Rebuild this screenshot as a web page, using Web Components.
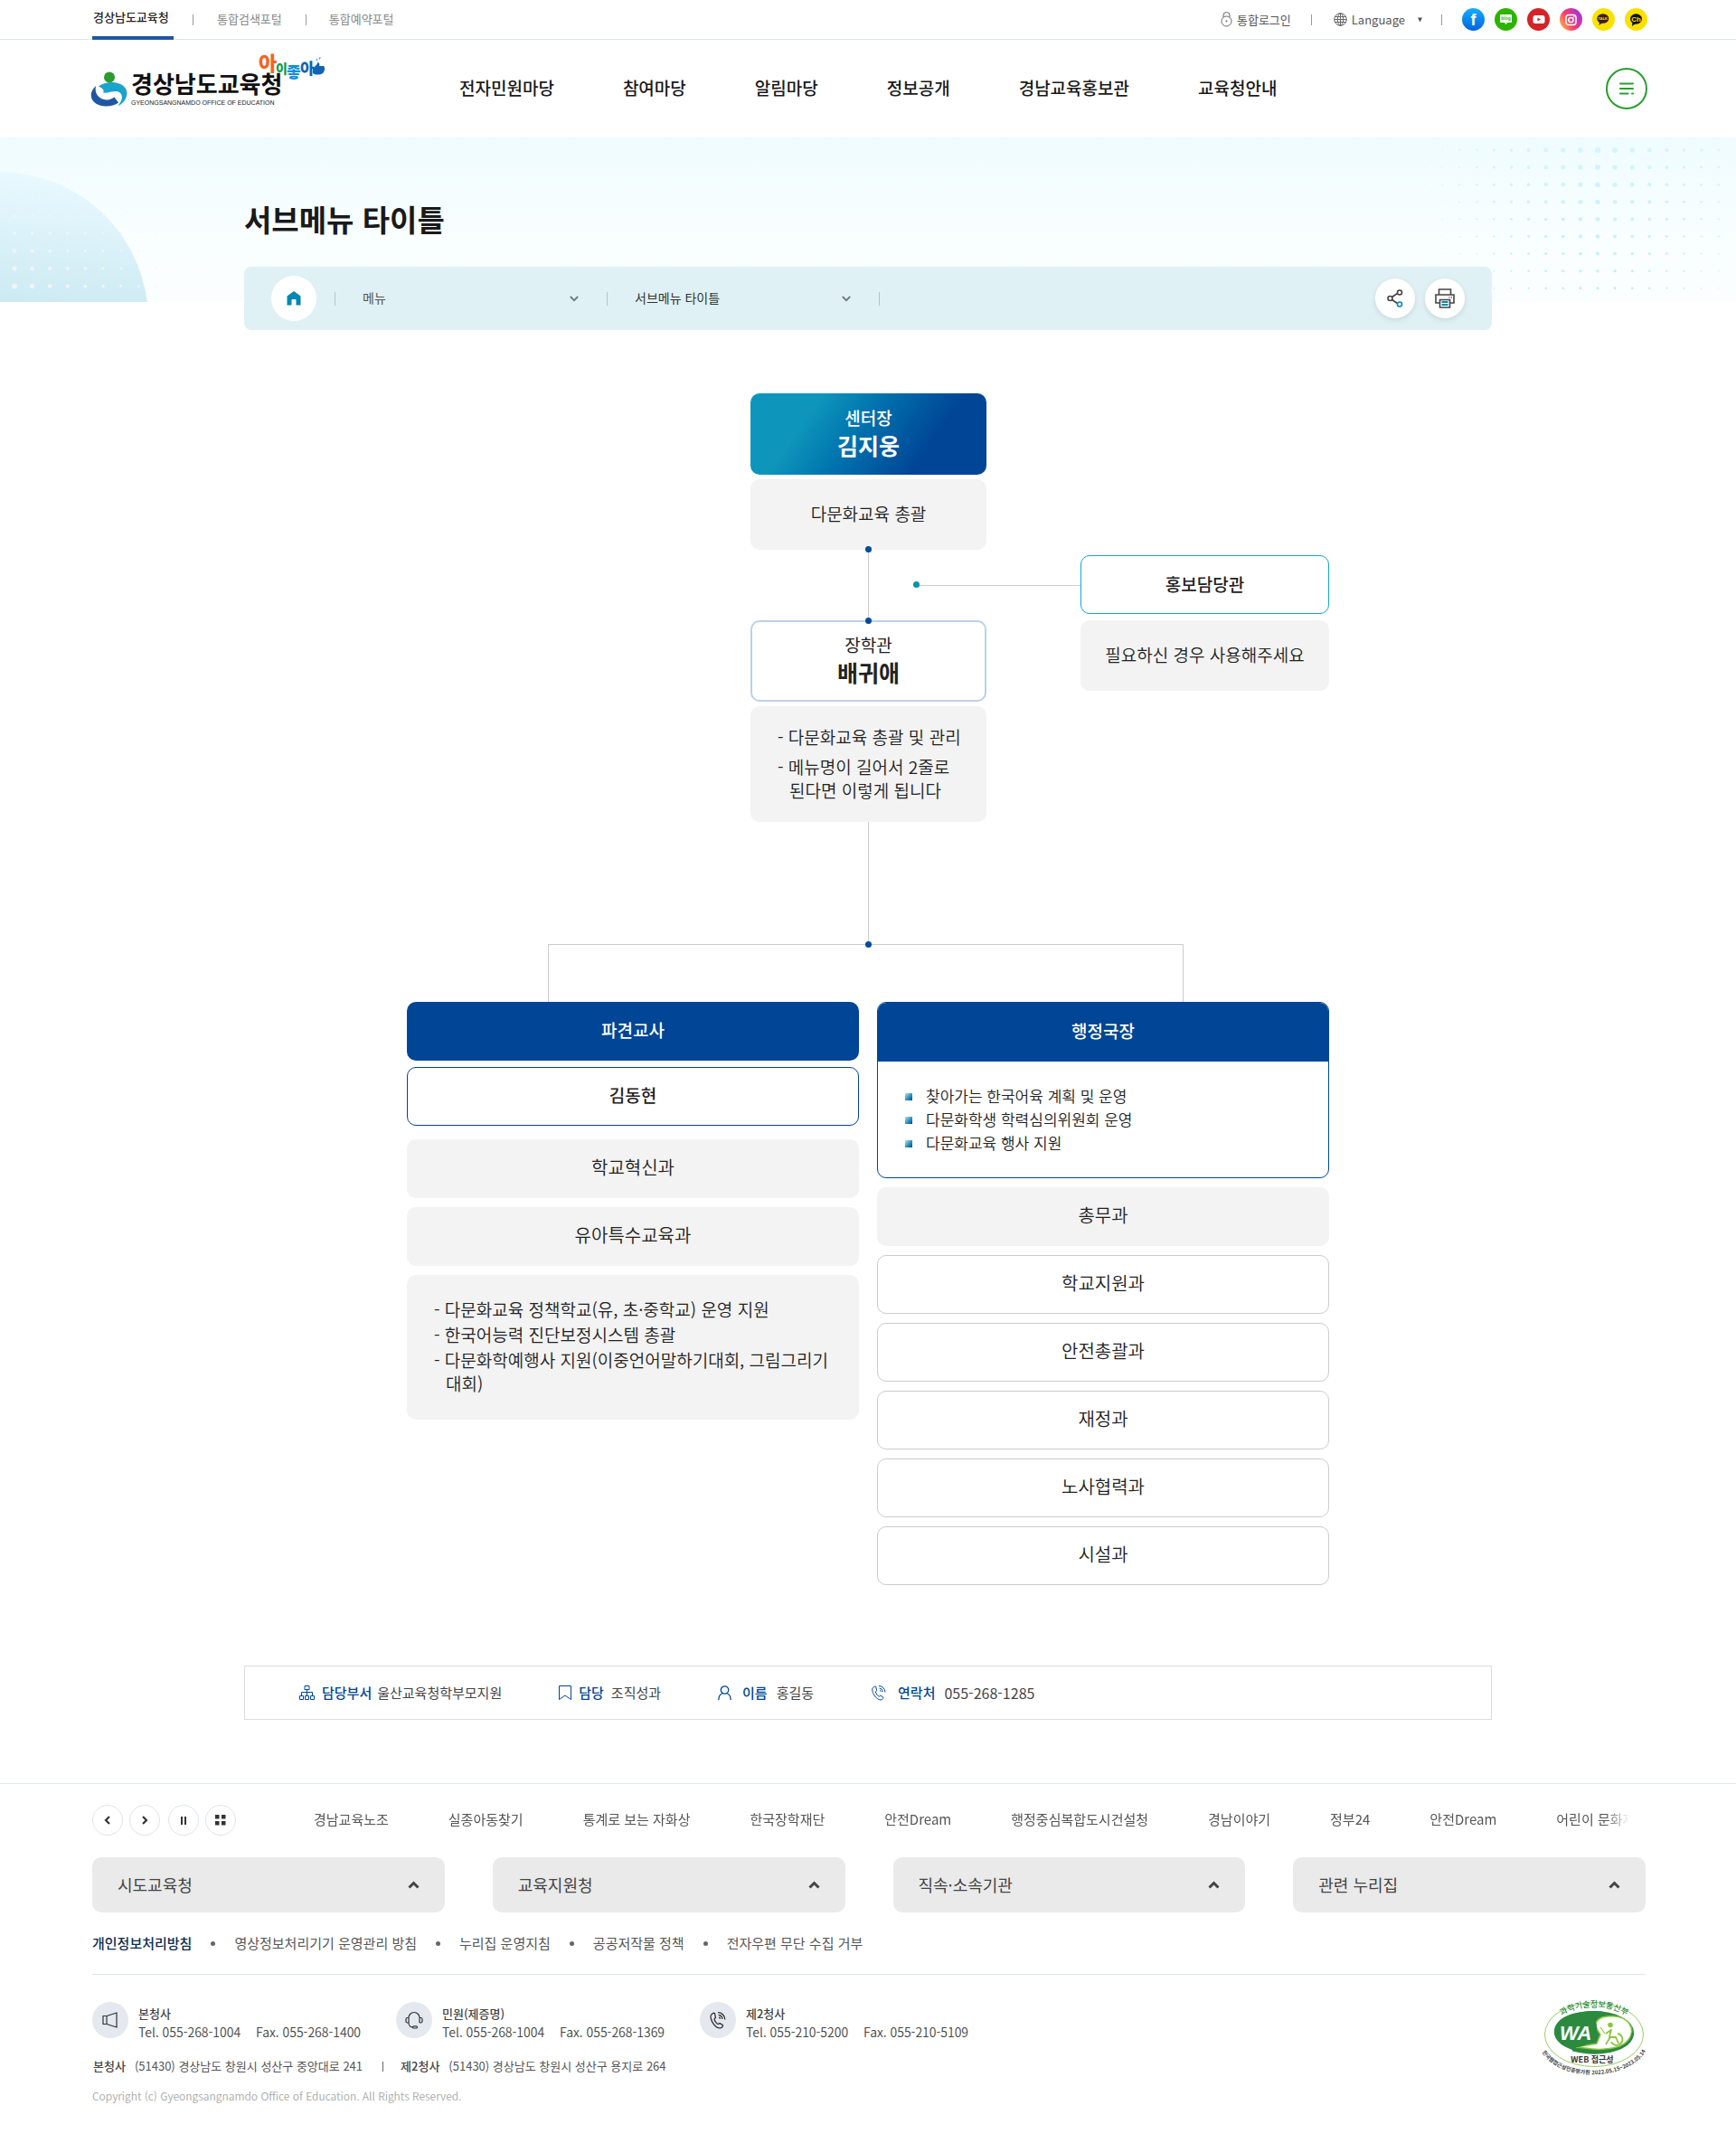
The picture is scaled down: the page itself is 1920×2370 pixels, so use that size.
<!DOCTYPE html>
<html lang="ko">
<head>
<meta charset="utf-8">
<title>경상남도교육청</title>
<meta name="viewport" content="width=device-width, initial-scale=1">
<style>
body{margin:0;background:#fff;color:#333;font-family:"Noto Sans CJK KR","Noto Sans",sans-serif;font-size:15px;word-break:keep-all;
  --gutter-l:102px;--gutter-r:100px;--blue:#004596;--line:#e2e6ec}
</style>
</head>
<body>
<site-topbar></site-topbar>
<site-header></site-header>
<page-hero heading="서브메뉴 타이틀"><bread-crumb></bread-crumb></page-hero>
<main>
  <org-chart></org-chart>
  <staff-info>
    <staff-item icon="org" label="담당부서">울산교육청학부모지원</staff-item>
    <staff-item icon="mark" label="담당">조직성과</staff-item>
    <staff-item icon="user" label="이름">홍길동</staff-item>
    <staff-item icon="phone" label="연락처">055-268-1285</staff-item>
  </staff-info>
</main>
<site-footer></site-footer>

<script>
const RESET = `*{box-sizing:border-box}a{color:inherit;text-decoration:none}ul,h1,p,dl,dd{margin:0;padding:0;list-style:none}
button,select{font:inherit;color:inherit;background:none;border:0;padding:0;margin:0;cursor:pointer}svg{display:block}`;

function component(name, css, html) {
  customElements.define(name, class extends HTMLElement {
    constructor() {
      super();
      const root = this.attachShadow({ mode: 'open' });
      root.innerHTML = `<style>${RESET}${css}</style>${typeof html === 'function' ? html(this) : html}`;
    }
  });
}

const PHONE = `<path d="M4.500 2 2.500 3.500C1 5 2 9 4 12s5 5 7 5c1.500 0 2.500-1 3-2.200l-.3-.9-2.900-1.700-1.600 1C8 13 5.500 9.500 5.400 8l1.300-1.300-.9-4.400z"/><path d="M9 1.500a7 7 0 0 1 7 7M9.500 4a4.500 4.500 0 0 1 4 4M10 6.300a2 2 0 0 1 1.400 1.500"/>`;

/* ---------- top utility bar ---------- */
component('site-topbar', `
:host{display:block;border-bottom:1px solid #dfe3ec;font-size:13px}
.bar{display:flex;justify-content:space-between;height:43px;padding:0 98px 0 var(--gutter-l)}
nav,.util{display:flex;align-items:center}
nav a{color:#888;line-height:38px;padding-bottom:2px}
nav a.on{width:90px;height:44px;padding-left:1px;border-bottom:4px solid #1f57a4;color:#222;font-weight:500;align-self:flex-start}
i{width:1px;height:12px;background:#999}
nav i{margin:0 25px 0 26px}nav i:first-of-type{margin:0 26px 0 21px}
.util>*{color:#555}
.util button,.util .login{display:flex;align-items:center;gap:5px}
.util i{margin:0 24px 0 22px}
.util button+i{margin:0 22px 0 21px}
.tri{margin-left:9px}
.sns{display:flex;gap:11px}
`, `
<div class="bar">
<nav aria-label="사이트"><a class="on" href="#">경상남도교육청</a><i></i><a href="#">통합검색포털</a><i></i><a href="#">통합예약포털</a></nav>
<div class="util">
<a class="login" href="#"><svg width="13" height="17" viewBox="0 0 13 17" fill="none" stroke="#666"><circle cx="6.500" cy="10.500" r="5.500"/><path d="M3 6V4a3.500 3.500 0 0 1 7 0v2"/><circle cx="6.500" cy="10.500" r=".6" fill="#666"/></svg>통합로그인</a><i></i>
<button type="button"><svg width="15" height="15" viewBox="0 0 15 15" fill="none" stroke="#666"><circle cx="7.500" cy="7.500" r="6.800"/><ellipse cx="7.500" cy="7.500" rx="3.200" ry="6.800"/><path d="M7.500.7v13.600M1.500 4.500h12M.7 7.500h13.600M1.500 10.500h12"/></svg>Language<svg class="tri" width="5" height="6" viewBox="0 0 5 6"><path d="M0 .5h5L2.500 5.500z" fill="#555"/></svg></button><i></i>
<div class="sns">
<a href="#" aria-label="페이스북"><svg width="25" height="25" viewBox="0 0 25 25"><defs><linearGradient id="f" x2="0" y2="1"><stop stop-color="#18acfe"/><stop offset="1" stop-color="#0163e0"/></linearGradient></defs><circle cx="12.500" cy="12.500" r="12.500" fill="url(#f)"/><text x="12.500" y="19" text-anchor="middle" font-family="Liberation Sans" font-weight="700" font-size="18" fill="#fff">f</text></svg></a>
<a href="#" aria-label="블로그"><svg width="25" height="25" viewBox="0 0 25 25"><circle cx="12.500" cy="12.500" r="12.500" fill="#2db400"/><path d="M7 7h11a1 1 0 0 1 1 1v7a1 1 0 0 1-1 1h-4l-1.500 2.300L11 16H7a1 1 0 0 1-1-1V8a1 1 0 0 1 1-1z" fill="#fff"/><text x="12.500" y="13.300" text-anchor="middle" font-family="Liberation Sans" font-weight="700" font-size="5" fill="#2db400">blog</text></svg></a>
<a href="#" aria-label="유튜브"><svg width="25" height="25" viewBox="0 0 25 25"><circle cx="12.500" cy="12.500" r="12.500" fill="#d42428"/><rect x="6.500" y="8" width="13" height="9" rx="2.500" fill="#fff"/><path d="M11.500 10.500v4l3.500-2z" fill="#d42428"/></svg></a>
<a href="#" aria-label="인스타그램"><svg width="25" height="25" viewBox="0 0 25 25"><defs><linearGradient id="g" x1="0" y1=".8" x2="1" y2=".2"><stop stop-color="#ffb44a"/><stop offset=".4" stop-color="#f9406a"/><stop offset="1" stop-color="#9a30e8"/></linearGradient></defs><circle cx="12.500" cy="12.500" r="12.500" fill="url(#g)"/><g fill="none" stroke="#fff" stroke-width="1.500"><rect x="7" y="7.500" width="11" height="11" rx="3"/><circle cx="12.500" cy="13" r="2.600"/></g><circle cx="15.800" cy="9.800" r=".8" fill="#fff"/></svg></a>
<a href="#" aria-label="카카오톡"><svg width="25" height="25" viewBox="0 0 25 25"><circle cx="12.500" cy="12.500" r="12.500" fill="#fae100"/><ellipse cx="11.800" cy="11.500" rx="6.500" ry="5.300" fill="#3b1e1e"/><path d="M8 14.500 7.500 19l4-3z" fill="#3b1e1e"/><text x="11.800" y="13.300" text-anchor="middle" font-family="Liberation Sans" font-weight="700" font-size="4" fill="#fae100">TALK</text></svg></a>
<a href="#" aria-label="카카오채널"><svg width="25" height="25" viewBox="0 0 25 25"><circle cx="12.500" cy="12.500" r="12.500" fill="#fae100"/><ellipse cx="12.500" cy="12" rx="6.500" ry="5.800" fill="#111"/><path d="M8.500 15.500 8 20l4-3z" fill="#111"/><text x="12.500" y="14.800" text-anchor="middle" font-family="Liberation Sans" font-weight="700" font-size="8" fill="#fae100">Ch</text></svg></a>
</div></div></div>`);

/* ---------- main header ---------- */
component('site-logo', `:host{display:block}a{display:block}svg{overflow:visible}text{font-weight:700}.kids text{font-weight:900}`, `
<a href="#" aria-label="경상남도교육청 홈"><svg width="262" height="72" viewBox="0 0 262 72">
<circle cx="20" cy="23.500" r="6" fill="#2a9d2f"/>
<path d="M8 33.500C16 27.500 32 27 38 36c4 7-1 16-9 19.500C34 50 36 44 31 40c-5-3-12 1.500-18 .5C15 38 12 35 8 33.500z" fill="#1ba3cc"/>
<path d="M5 33c-7 6-7 15 0 19.500 7 4.500 19 3.500 25-1l-4.500-6C23 47 21 48.500 17 48.500 9 48 3 42 5 33z" fill="#1f57a4"/>
<text x="44" y="41" font-size="26" fill="#111">경상남도교육청</text>
<text x="44" y="54" font-size="7" fill="#222" font-family="Liberation Sans" style="font-weight:400">GYEONGSANGNAMDO OFFICE OF EDUCATION</text>
<g class="kids"><text x="185" y="16" font-size="22" fill="#f26522">아</text>
<text x="204" y="19" font-size="14" fill="#0a9f4b">이</text>
<text x="216" y="24" font-size="17" fill="#0d8fd8">좋</text>
<text x="231" y="20" font-size="17" fill="#1263b5">아</text></g>
<path d="M245 14c3-4 5-4 5-7 2 0 3 2 2 4h5c2 2 1 6-1 8-3 2-8 2-11 0z" fill="#1263b5"/><path d="M249 3l1 2M253 1l-.5 2.500" stroke="#0d8fd8"/>
</svg></a>`);

component('site-header', `
:host{display:flex;align-items:center;height:108px;padding:0 98px 0 101px}
nav{flex:1;margin-left:145px}
ul{display:flex;gap:76px;font-size:19px;font-weight:500;line-height:28px;color:#1a1a1a;padding-bottom:3px}
button{width:46px;height:46px;border:2px solid #2a9d2f;border-radius:50%;display:grid;place-items:center}
`, `
<site-logo></site-logo>
<nav aria-label="주 메뉴"><ul><li><a href="#">전자민원마당</a></li><li><a href="#">참여마당</a></li><li><a href="#">알림마당</a></li><li><a href="#">정보공개</a></li><li><a href="#">경남교육홍보관</a></li><li><a href="#">교육청안내</a></li></ul></nav>
<button type="button" aria-label="전체메뉴"><svg width="16" height="14" viewBox="0 0 16 14" stroke="#2a9d2f" stroke-width="2" stroke-linecap="round"><path d="M1 1.500h14M1 7h14M1 12.500h8.500M14 12.500h1"/></svg></button>`);

/* ---------- hero ---------- */
component('page-hero', `
:host{display:block;position:relative;padding:66px 0 0}
.bg{position:absolute;inset:0 0 auto;height:182px;overflow:hidden;background:linear-gradient(#effcff,#f9feff 60%,#fafeff)}
.bg svg{position:absolute;top:0}.bg .l{left:0}.bg .r{right:0}
.in{position:relative;max-width:1380px;margin:0 auto}
h1{font-size:33px;line-height:48px;font-weight:700;color:#1a1a1a;margin-bottom:29px}
`, el => {
  let left = '', right = '';
  for (let j = 0; j < 8; j++) for (let i = 0; i < 12; i++) {
    const r = 2.8 * (1 - i / 12) * Math.pow((j + 1) / 8, .8);
    left += `<circle cx="${16 + 19.6 * i}" cy="${28 + 19.5 * j}" r="${r.toFixed(2)}"/>`;
  }
  for (let j = 0; j < 9; j++) for (let i = 0; i < 18; i++) {
    const r = (3.2 - j * .2) * (1 - Math.abs(i - 10) / 12);
    right += `<circle cx="${16 + 19.1 * i}" cy="${14 + 19.1 * j}" r="${r.toFixed(2)}"/>`;
  }
  return `<div class="bg" aria-hidden="true">
<svg class="l" width="260" height="182"><defs><linearGradient id="c" x1=".6" y1="0" x2=".5" y2="1"><stop stop-color="#e9f9ff"/><stop offset=".5" stop-color="#c9e8f1"/></linearGradient></defs><circle cx="0" cy="202" r="164" fill="url(#c)"/><g fill="#f5f4f3">${left}</g></svg>
<svg class="r" width="360" height="182"><defs><linearGradient id="d" gradientUnits="userSpaceOnUse" x1="0" y1="0" x2="0" y2="182"><stop stop-color="#d8f6ff"/><stop offset="1" stop-color="#b8effd"/></linearGradient></defs><g fill="url(#d)">${right}</g></svg></div>
<div class="in"><h1>${el.getAttribute('heading')}</h1><slot></slot></div>`;
});

component('bread-crumb', `
:host{display:flex;align-items:center;height:70px;padding:0 30px;border-radius:8px;background:#dff1f5;font-size:14px}
.round{display:grid;place-items:center;width:44px;height:44px;border-radius:50%;background:#fff;box-shadow:0 2px 6px #0000001a}
.home{width:50px;height:50px;box-shadow:none;margin-right:20px}
i{width:1px;height:15px;background:#b4c3c7}
label{display:flex;align-items:center;width:300px;position:relative}
select{appearance:none;width:100%;height:40px;padding:0 0 2px 30px;color:#555;outline-offset:-2px}
.two select{color:#333}
label svg{position:absolute;right:31px;pointer-events:none}
.tools{display:flex;gap:11px;margin-left:auto}
`, `
<a class="round home" href="#" aria-label="홈"><svg width="16" height="16" viewBox="0 0 16 16"><path d="M8 0 .5 5.500V15.500h5V10a1 1 0 0 1 1-1h3a1 1 0 0 1 1 1v5.500h5v-10z" fill="#0788b0"/></svg></a><i></i>
<label><select aria-label="메뉴"><option>메뉴</option></select><svg width="10" height="7" viewBox="0 0 10 7" fill="none" stroke="#777" stroke-width="1.800"><path d="m.8 1 4.200 4.200L9.200 1"/></svg></label><i></i>
<label class="two"><select aria-label="서브메뉴"><option>서브메뉴 타이틀</option></select><svg width="10" height="7" viewBox="0 0 10 7" fill="none" stroke="#777" stroke-width="1.800"><path d="m.8 1 4.200 4.200L9.200 1"/></svg></label><i></i>
<div class="tools">
<button class="round" type="button" aria-label="공유"><svg width="18" height="20" viewBox="0 0 18 20" fill="none" stroke="#444" stroke-width="1.600"><path d="m5.500 8.500 6-4M5.500 11.500l6 4"/><circle cx="3.500" cy="10" r="2.500"/><circle cx="14" cy="3.500" r="2.500"/><circle cx="14" cy="16.500" r="2.500" stroke="#0788b0"/></svg></button>
<button class="round" type="button" aria-label="인쇄"><svg width="22" height="22" viewBox="0 0 22 22" fill="none" stroke="#444" stroke-width="1.600"><path d="M4.500 7V1h13v6M5 16H1V7h20v9h-4M5.500 12.500h11v8.500h-11z"/><path d="M15.500 9.800h1M17.800 9.800h1"/><path d="M7.500 15h7M7.500 18h7" stroke="#0788b0" stroke-width="1.800"/></svg></button>
</div>`);

/* ---------- organisation chart ---------- */
component('org-box', `
:host{display:flex;flex-direction:column;align-items:center;justify-content:center;min-height:65px;border-radius:10px;background:#f3f3f3;color:#222;font-size:20px;font-weight:350;line-height:30px;text-align:center;padding-bottom:3px;box-sizing:border-box}
:host([size=m]){min-height:78px;font-size:19px}
:host([kind=lead]),:host([kind=deputy]){min-height:90px;font-size:19px;font-weight:500;padding-bottom:7px}
:host([kind=lead]){color:#fff;background:linear-gradient(125deg,#0e95bb 25%,#0074ae 45%,#004596 74%)}
:host([kind=deputy]){background:#fff;border:2px solid #bcd0ea;font-weight:400}
:host([kind=teal]){background:#fff;border:1px solid #1ba3c6;font-size:19px;font-weight:500;padding-bottom:1px}
:host([kind=blue]){background:var(--blue);color:#fff;font-size:19px;font-weight:500}
:host([kind=name]){background:#fff;border:1px solid var(--blue);font-size:19px;font-weight:500}
:host([kind=line]){background:#fff;border:1px solid #ccc}
::slotted(strong){font-size:25px;font-weight:700}
`, `<slot></slot>`);

component('org-duties', `
:host{display:block;border-radius:10px;background:#f3f3f3;padding:21px 20px 21px 30px;color:#222;font-size:19px;font-weight:350;line-height:26px}
ul{display:grid;gap:var(--duty-gap,2px)}
::slotted(li){list-style:none;padding-left:13px;text-indent:-13px}
`, `<ul><slot></slot></ul>`);

component('org-panel', `
:host{display:block;border:1px solid var(--blue);border-radius:10px;overflow:hidden;background:#fff}
header{background:var(--blue);color:#fff;font-size:19px;font-weight:500;line-height:61px;padding-bottom:4px;text-align:center}
ul{padding:25px 30px;color:#222;font-size:17px;font-weight:350;line-height:26px}
::slotted(li){list-style:none;padding-left:23px;background:linear-gradient(135deg,#b5e4ee,#2b93bf 55%,#00459a) 0 10px/8px 8px no-repeat}
`, el => `<header>${el.getAttribute('heading')}</header><ul><slot></slot></ul>`);

component('org-chart', `
:host{display:block;max-width:1020px;margin:70px auto 0}
.top{display:grid;grid-template-columns:380px 261px 1fr 275px}
.a,.c,.side{display:grid;align-content:start;gap:5px}
.a,.stem,.c{grid-column:2}
.stem,.drop{position:relative;width:1px;background:#ccc;justify-self:center}
.stem{height:78px}
.stem::before,.stem::after,.drop::after,.arm::before{content:"";position:absolute;left:-3px;width:7px;height:7px;border-radius:50%;background:#004b9f}
.stem::before{top:-4px}.stem::after{bottom:-4px;z-index:1}
.stem,.arm{grid-row:2}
.arm{grid-column:2/4;align-self:center;position:relative;height:1px;margin-left:183px;background:#ccc}
.arm::before{top:-4px;background:#0092b0}
.c{grid-row:3}
.c org-duties{--duty-gap:7px;padding-bottom:22px}
.side{grid-column:4;grid-row:2/4;gap:7px;padding-top:6px}
.drop{height:135px;margin:0 auto}
.drop::after{bottom:-4px}
.fork{height:64px;margin:0 161px 0 156px;border:1px solid #ccc;border-bottom:0}
.cols{display:grid;grid-template-columns:1fr 1fr;gap:20px;align-items:start}
.col{display:grid;gap:10px}
.pair{display:grid;gap:7px;margin-bottom:5px}
.col org-duties{padding-top:25px;padding-bottom:27px}
`, `
<div class="top">
<div class="a"><org-box kind="lead"><span>센터장</span><strong>김지웅</strong></org-box><org-box size="m">다문화교육 총괄</org-box></div>
<div class="stem"></div><div class="arm"></div>
<div class="c"><org-box kind="deputy"><span>장학관</span><strong>배귀애</strong></org-box>
<org-duties><li>- 다문화교육 총괄 및 관리</li><li>- 메뉴명이 길어서 2줄로 된다면 이렇게 됩니다</li></org-duties></div>
<div class="side"><org-box kind="teal">홍보담당관</org-box><org-box size="m">필요하신 경우 사용해주세요</org-box></div>
</div>
<div class="drop"></div><div class="fork"></div>
<div class="cols">
<div class="col"><div class="pair"><org-box kind="blue">파견교사</org-box><org-box kind="name">김동현</org-box></div>
<org-box>학교혁신과</org-box><org-box>유아특수교육과</org-box>
<org-duties><li>- 다문화교육 정책학교(유, 초·중학교) 운영 지원</li><li>- 한국어능력 진단보정시스템 총괄</li><li>- 다문화학예행사 지원(이중언어말하기대회, 그림그리기 대회)</li></org-duties></div>
<div class="col"><org-panel heading="행정국장"><li>찾아가는 한국어육 계획 및 운영</li><li>다문화학생 학력심의위원회 운영</li><li>다문화교육 행사 지원</li></org-panel>
<org-box>총무과</org-box><org-box kind="line">학교지원과</org-box><org-box kind="line">안전총괄과</org-box><org-box kind="line">재정과</org-box><org-box kind="line">노사협력과</org-box><org-box kind="line">시설과</org-box></div>
</div>`);

/* ---------- page manager info ---------- */
const STAFF_ICONS = {
  org: `<svg width="17" height="16" viewBox="0 0 17 16"><path d="M6 .5h5v4H6zM.5 11.500h4v4h-4zM6.500 11.500h4v4h-4zM12.500 11.500h4v4h-4zM8.500 4.500v7M2.500 11.500v-4h12v4"/></svg>`,
  mark: `<svg width="14" height="16" viewBox="0 0 14 16"><path d="M.5.5h13v15L7 11 .5 15.500z"/></svg>`,
  user: `<svg width="15" height="16" viewBox="0 0 15 16" stroke-width="1.300"><circle cx="7.500" cy="5" r="4.200"/><path d="M.8 16c0-4 2-6.500 4.500-7.500M14.200 16c0-4-2-6.500-4.500-7.500"/></svg>`,
  phone: `<svg width="18" height="18" viewBox="0 0 18 18">${PHONE}</svg>`
};
component('staff-item', `
:host{display:flex;align-items:center;font-size:15px;line-height:24px;color:#444}
svg{fill:none;stroke:var(--blue);margin-right:8px}
b{font-weight:500;color:var(--blue);margin-right:6px}
:host([icon=mark]) b{margin-right:8px}
:host([icon=user]) svg,:host([icon=phone]) svg{margin-right:12px}
:host([icon=phone]){font-size:16px}
:host([icon=phone]) b{font-size:15px}
:host([icon=user]) b,:host([icon=phone]) b{margin-right:10px}
`, el => `${STAFF_ICONS[el.getAttribute('icon')]}<b>${el.getAttribute('label')}</b><slot></slot>`);
component('staff-info', `
:host{display:flex;align-items:center;gap:63px;max-width:1380px;height:60px;box-sizing:border-box;margin:89px auto 70px;padding:0 60px;border:1px solid #ddd}
`, `<slot></slot>`);

/* ---------- footer ---------- */
component('footer-contact', `
:host{display:flex;gap:11px;width:336px;font-size:14px;line-height:20px;color:#444}
span.ic{display:grid;place-items:center;width:40px;height:40px;border-radius:50%;background:#e4e9f0}
svg{fill:none;stroke:#333;stroke-width:1.200}
.txt{padding-top:3px}
b{font-weight:500;color:#444;display:block;font-size:13px}
p{display:flex;gap:17px;font-weight:350}
`, el => {
  const icons = {
    horn: `<svg width="18" height="18" viewBox="0 0 18 18"><path d="M1 4.500h4v9H1zM5 4.500l11-3.500v16L5 13.500"/></svg>`,
    head: `<svg width="20" height="20" viewBox="0 0 20 20"><path d="M4 13V7.500a6 6 0 0 1 12 0V13M4 7.500H2.500a1.500 1.500 0 0 0-1.500 1.500v2.500A1.500 1.500 0 0 0 2.500 13H4M16 7.500h1.500A1.500 1.500 0 0 1 19 9v2.500a1.500 1.500 0 0 1-1.500 1.500H16M4 13c0 3 2 5 4.500 5"/><rect x="8.500" y="16.800" width="5" height="2.200" rx="1.100"/></svg>`,
    phone: `<svg width="20" height="20" viewBox="0 0 18 18">${PHONE}</svg>`
  };
  return `<span class="ic">${icons[el.getAttribute('icon')]}</span><div class="txt"><b>${el.getAttribute('name')}</b><p><span>Tel. ${el.getAttribute('tel')}</span><span>Fax. ${el.getAttribute('fax')}</span></p></div>`;
});

component('wa-mark', `:host{display:block}svg{overflow:visible}`, `
<svg width="114" height="82" viewBox="0 0 114 82" role="img" aria-label="웹 접근성 인증마크">
<defs><path id="t" d="M12 25C28-1 86-1 102 25"/><path id="b" d="M-1 54C16 89 96 89 115 53"/></defs>
<ellipse cx="57" cy="36" rx="54.500" ry="35.500" fill="#fff" stroke="#9ccc65"/>
<ellipse cx="57" cy="33.500" rx="44" ry="23.500" fill="#2b8a3e"/>
<path d="M66 17c12-3 24-1 30 7 6 9 1 20-11 25-12 4-26 4-38 2l-10-1 23-4 4-10-5-8c-1-5 2-9 7-11z" fill="#fff" stroke="#8bc53f" stroke-width="1.500"/>
<path d="M13 33c0-14 18-23 44-23 3 0 8 0 11 1-8 2-12 7-9 12 3 6 1 17-9 23-4 3-12 5-18 4-11-2-19-8-19-17z" fill="#2b8a3e"/>
<path d="M33 53c30 8 66 1 67-19" fill="none" stroke="#2b8a3e" stroke-width="2.500"/>
<text x="19" y="42" font-family="Liberation Sans" font-size="22" font-weight="700" font-style="italic" fill="#fff">WA</text>
<g fill="none" stroke="#8bc53f" stroke-width="1.800"><path d="M83 35a6.500 6.500 0 1 1-7 9"/><path d="M76 30l-2 9h7l3 7M75 39l-5 8M76 31l-6 4"/><path d="M64 28l5 7" stroke-width="1.200"/></g><circle cx="75" cy="25.500" r="2.800" fill="#8bc53f"/>
<text font-size="9" font-weight="500" fill="#2b8a3e"><textPath href="#t" startOffset="50%" text-anchor="middle">과학기술정보통신부</textPath></text>
<text x="55" y="67" text-anchor="middle" font-size="9" font-weight="700" fill="#333">WEB 접근성</text>
<text font-size="6" font-weight="700" fill="#444"><textPath href="#b" startOffset="50%" text-anchor="middle">한국웹접근성인증평가원 2022.05.15~2023.05.14</textPath></text>
</svg>`);

component('site-footer', `
:host{display:block;border-top:1px solid #dfe6ec;padding:23px var(--gutter-r) 42px var(--gutter-l);color:#555}
.roll{display:flex;align-items:center;height:34px}
.ctl{display:flex;gap:7px}
.ctl button{width:34px;height:34px;border:1px solid #dfe4ec;border-radius:50%;display:grid;place-items:center}
.ctl button:nth-child(3){margin-left:2px}
.roll ul{flex:1;display:flex;gap:66px;margin:0 18px 0 86px;overflow:hidden;white-space:nowrap;line-height:24px;padding-bottom:3px;-webkit-mask:linear-gradient(90deg,#000 calc(100% - 26px),transparent);mask:linear-gradient(90deg,#000 calc(100% - 26px),transparent)}
.fam{display:grid;grid-template-columns:repeat(4,1fr);gap:53px;margin-top:24px}
.fam button{display:flex;align-items:center;justify-content:space-between;height:61px;padding:0 28px;border-radius:10px;background:#eaeaea;font-size:18px;color:#444}
.fam span{padding-bottom:2px}
.pol{display:flex;margin:22px 0;line-height:24px}
.pol li{display:flex;align-items:center}
.pol li+li::before{content:"";width:5px;height:5px;border-radius:50%;background:#666;margin:0 21px}
.pol li:first-child{font-weight:500;color:#0c2c50}
.info{display:flex;justify-content:space-between;border-top:1px solid var(--line);padding-top:30px}
.who{display:flex}
address{display:flex;align-items:center;font-style:normal;font-size:13px;line-height:20px;margin:18px 0 13px 1px}
address b{font-weight:500;color:#444;margin-right:10px}
address i{width:1px;height:11px;background:#666;margin:0 19px 0 22px}
small{display:block;font-size:12px;line-height:20px;font-weight:350;color:#aaa}
`, () => {
  const up = `<svg width="13" height="9" viewBox="0 0 13 9" fill="none" stroke="#444" stroke-width="3"><path d="m1.500 7.500 5-5 5 5"/></svg>`;
  const li = a => a.map(t => `<li><a href="#">${t}</a></li>`).join('');
  return `
<div class="roll"><div class="ctl">
<button type="button" aria-label="이전"><svg width="8" height="10" viewBox="0 0 8 10" fill="none" stroke="#333" stroke-width="2.200"><path d="M6 1 2 5l4 4"/></svg></button>
<button type="button" aria-label="다음"><svg width="8" height="10" viewBox="0 0 8 10" fill="none" stroke="#333" stroke-width="2.200"><path d="m2 1 4 4-4 4"/></svg></button>
<button type="button" aria-label="정지"><svg width="6" height="9" viewBox="0 0 6 9" fill="#333"><path d="M0 0h2v9H0zM4 0h2v9H4z"/></svg></button>
<button type="button" aria-label="목록"><svg width="12" height="12" viewBox="0 0 12 12" fill="#333"><path d="M0 0h4.500v4.500H0zM7 0h4.500v4.500H7zM0 7h4.500v4.500H0zM7 7h4.500v4.500H7z"/></svg></button>
</div><ul>${li(['경남교육노조', '실종아동찾기', '통계로 보는 자화상', '한국장학재단', '안전Dream', '행정중심복합도시건설청', '경남이야기', '정부24', '안전Dream', '어린이 문화재'])}</ul></div>
<div class="fam">${['시도교육청', '교육지원청', '직속·소속기관', '관련 누리집'].map(t => `<button type="button"><span>${t}</span>${up}</button>`).join('')}</div>
<ul class="pol">${li(['개인정보처리방침', '영상정보처리기기 운영관리 방침', '누리집 운영지침', '공공저작물 정책', '전자우편 무단 수집 거부'])}</ul>
<div class="info"><div>
<div class="who"><footer-contact icon="horn" name="본청사" tel="055-268-1004" fax="055-268-1400"></footer-contact><footer-contact icon="head" name="민원(제증명)" tel="055-268-1004" fax="055-268-1369"></footer-contact><footer-contact icon="phone" name="제2청사" tel="055-210-5200" fax="055-210-5109"></footer-contact></div>
<address><b>본청사</b>(51430) 경상남도 창원시 성산구 중앙대로 241<i></i><b>제2청사</b>(51430) 경상남도 창원시 성산구 용지로 264</address>
<small>Copyright (c) Gyeongsangnamdo Office of Education. All Rights Reserved.</small>
</div><wa-mark></wa-mark></div>`;
});
</script>
</body>
</html>
